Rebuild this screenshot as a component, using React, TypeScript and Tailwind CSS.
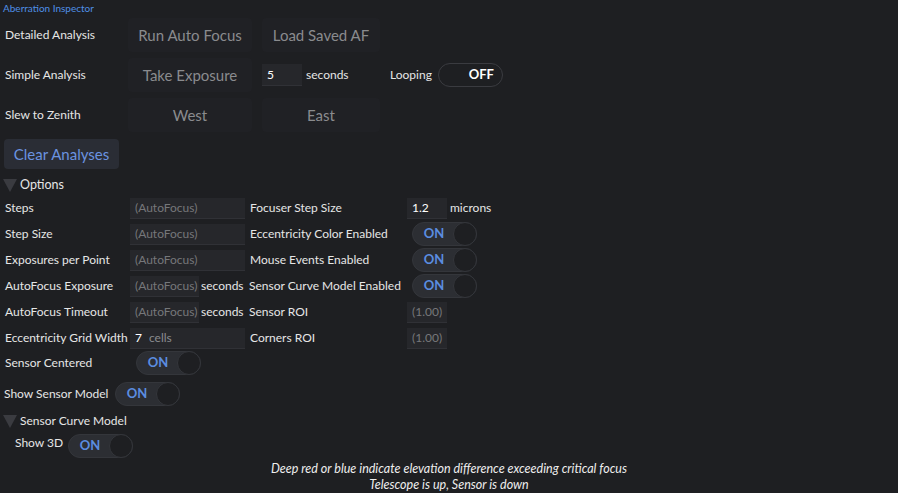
const font = "font-['Segoe_UI','Lato','Noto_Sans',sans-serif]";

function Toggle({ className = "" }: { className?: string }) {
  return (
    <div className={`flex items-center h-[24px] w-[65px] rounded-full bg-[#2c2e33] border border-[#34363b] ${className}`}>
      <span className="flex-1 text-center pl-[2px] text-[13px] font-bold text-[#5b8de0]">ON</span>
      <span className="h-[24px] w-[24px] rounded-full bg-[#1e1f22] border border-[#34363b] -mr-[1px]" />
    </div>
  );
}

function Btn({ children, className = "w-[124px]" }: { children: React.ReactNode; className?: string }) {
  return (
    <div className={`flex items-center justify-center h-[34px] rounded-sm bg-[#202125] text-[15px] text-[#8a8b8e] ${className}`}>
      {children}
    </div>
  );
}

function Field({ value, dim = true, className = "w-[115px]" }: { value: string; dim?: boolean; className?: string }) {
  return (
    <div className={`h-[21px] flex items-center px-[5px] bg-[#26272b] border-b border-[#303136] text-[12px] ${dim ? "text-[#76777a]" : "text-white"} ${className}`}>
      {value}
    </div>
  );
}

function Row({ children }: { children: React.ReactNode }) {
  return <div className="flex items-center h-[26px] whitespace-nowrap">{children}</div>;
}

export default function App() {
  return (
    <div className={`w-[898px] h-[493px] bg-[#1e1f22] text-[#e6e6e6] text-[12px] overflow-hidden whitespace-nowrap ${font}`}>
      <div className="h-[16px] pl-[3px] text-[10px] leading-[16px] text-[#4f8fe6]">Aberration Inspector</div>

      <div className="flex flex-col gap-[6px] mt-[2px]">
        <div className="flex items-center h-[34px]">
          <div className="w-[128px] pl-[5px]">Detailed Analysis</div>
          <Btn>Run Auto Focus</Btn>
          <div className="w-[10px]" />
          <Btn className="w-[118px]">Load Saved AF</Btn>
        </div>
        <div className="flex items-center h-[34px]">
          <div className="w-[128px] pl-[5px]">Simple Analysis</div>
          <Btn>Take Exposure</Btn>
          <div className="w-[10px]" />
          <Field value="5" dim={false} className="w-[40px] h-[22px]" />
          <span className="ml-[4px] w-[84px]">seconds</span>
          <span>Looping</span>
          <div className="ml-[6px] flex items-center justify-end pr-[8px] h-[24px] w-[65px] rounded-full border border-[#3a3b40] text-[13px] font-bold text-white">OFF</div>
        </div>
        <div className="flex items-center h-[34px]">
          <div className="w-[128px] pl-[5px]">Slew to Zenith</div>
          <Btn>West</Btn>
          <div className="w-[10px]" />
          <Btn className="w-[118px]">East</Btn>
        </div>
      </div>

      <div className="ml-[4px] mt-[7px] w-[115px] h-[30px] flex items-center justify-center rounded-sm bg-[#2a2d35] text-[15px] text-[#6a93e0]">
        Clear Analyses
      </div>

      <div className="flex items-center h-[18px] mt-[7px]">
        <div className="ml-[3px] w-0 h-0 border-l-[7px] border-r-[7px] border-t-[13px] border-l-transparent border-r-transparent border-t-[#3a3b40]" />
        <span className="ml-[3px] text-[12.5px]">Options</span>
      </div>

      <div className="flex flex-col mt-[1px]">
        <Row>
          <div className="w-[130px] pl-[5px]">Steps</div>
          <Field value="(AutoFocus)" />
          <div className="w-[162px] pl-[5px]">Focuser Step Size</div>
          <Field value="1.2" dim={false} className="w-[40px]" />
          <span className="ml-[3px]">microns</span>
        </Row>
        <Row>
          <div className="w-[130px] pl-[5px]">Step Size</div>
          <Field value="(AutoFocus)" />
          <div className="w-[162px] pl-[5px]">Eccentricity Color Enabled</div>
          <Toggle className="ml-[5px]" />
        </Row>
        <Row>
          <div className="w-[130px] pl-[5px]">Exposures per Point</div>
          <Field value="(AutoFocus)" />
          <div className="w-[162px] pl-[5px]">Mouse Events Enabled</div>
          <Toggle className="ml-[5px]" />
        </Row>
        <Row>
          <div className="w-[130px] pl-[5px]">AutoFocus Exposure</div>
          <Field value="(AutoFocus)" className="w-[69px]" />
          <span className="w-[46px] pl-[2px]">seconds</span>
          <div className="w-[162px] pl-[4px]">Sensor Curve Model Enabled</div>
          <Toggle className="ml-[5px]" />
        </Row>
        <Row>
          <div className="w-[130px] pl-[5px]">AutoFocus Timeout</div>
          <Field value="(AutoFocus)" className="w-[69px]" />
          <span className="w-[46px] pl-[2px]">seconds</span>
          <div className="w-[162px] pl-[4px]">Sensor ROI</div>
          <Field value="(1.00)" className="w-[40px]" />
        </Row>
        <Row>
          <div className="w-[130px] pl-[5px]">Eccentricity Grid Width</div>
          <div className="w-[115px] h-[21px] flex items-center px-[5px] bg-[#26272b] border-b border-[#303136] text-[12px]">
            <span className="text-white">7</span>
            <span className="ml-[7px] text-[#8a8b8e]">cells</span>
          </div>
          <div className="w-[162px] pl-[5px]">Corners ROI</div>
          <Field value="(1.00)" className="w-[40px]" />
        </Row>
      </div>

      <div className="flex items-center h-[26px] mt-[-1px]">
        <div className="w-[136px] pl-[5px]">Sensor Centered</div>
        <Toggle />
      </div>

      <div className="flex items-center h-[26px] mt-[5px]">
        <div className="w-[115px] pl-[4px]">Show Sensor Model</div>
        <Toggle />
      </div>

      <div className="flex items-center h-[18px] mt-[5px]">
        <div className="ml-[3px] w-0 h-0 border-l-[7px] border-r-[7px] border-t-[13px] border-l-transparent border-r-transparent border-t-[#3a3b40]" />
        <span className="ml-[3px]">Sensor Curve Model</span>
      </div>

      <div className="flex items-start h-[26px] mt-[4px]">
        <div className="w-[68px] pl-[15px] leading-[18px]">Show 3D</div>
        <Toggle />
      </div>

      <div className="mt-[1px] text-center italic text-[12.5px] leading-[16px] text-[#eeeeee]">
        <div>Deep red or blue indicate elevation difference exceeding critical focus</div>
        <div>Telescope is up, Sensor is down</div>
      </div>
    </div>
  );
}
